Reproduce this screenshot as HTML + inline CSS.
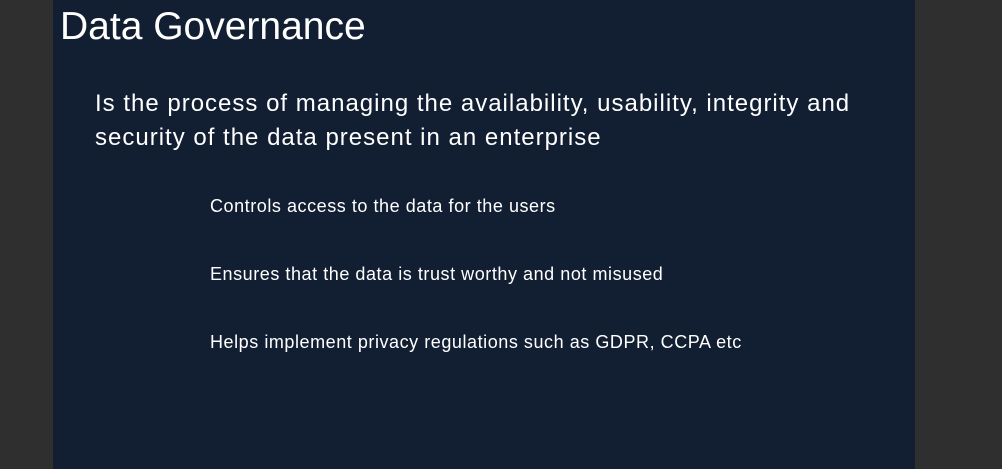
<!DOCTYPE html>
<html><head><style>
html,body{margin:0;padding:0;width:1002px;height:469px;overflow:hidden;background:#2f2f2f;}
.slide{position:absolute;left:53px;top:0;width:862px;height:469px;background:#121e32;}
.t{position:absolute;color:#fff;white-space:nowrap;font-family:"Liberation Sans",sans-serif;}
</style></head><body>
<div class="slide"></div>
<div class="t" style="left:60px;top:5px;font-size:39px;">Data Governance</div>
<div class="t" style="left:95px;top:87px;font-size:24px;line-height:34px;letter-spacing:1.0px;">Is the process of managing the availability, usability, integrity and<br>security of the data present in an enterprise</div>
<div class="t" style="left:210px;top:196px;font-size:18px;letter-spacing:0.55px;">Controls access to the data for the users</div>
<div class="t" style="left:210px;top:264px;font-size:18px;letter-spacing:0.55px;">Ensures that the data is trust worthy and not misused</div>
<div class="t" style="left:210px;top:332px;font-size:18px;letter-spacing:0.55px;">Helps implement privacy regulations such as GDPR, CCPA etc</div>
</body></html>
